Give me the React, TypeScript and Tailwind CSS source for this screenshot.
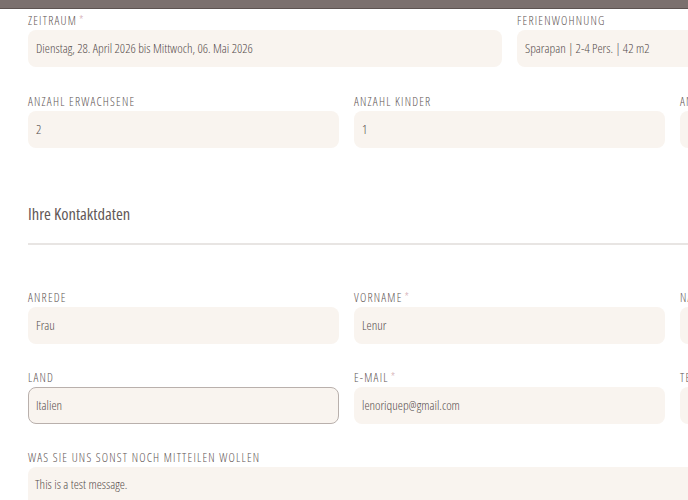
import React from "react";

const font = { fontFamily: '"Open Sans", "DejaVu Sans Condensed", sans-serif', fontStretch: "75%" };

function Label({ text, required }: { text: string; required?: boolean }) {
  return (
    <div className="h-[14px] text-[12px] leading-[14px] tracking-[0.1em] uppercase font-light text-[#5e5453] whitespace-nowrap mb-[2px]">
      {text}
      {required && <span className="text-[#cfa5ad] ml-[2px]">*</span>}
    </div>
  );
}

function Field({
  label,
  value,
  required,
  focused,
}: {
  label: string;
  value: string;
  required?: boolean;
  focused?: boolean;
}) {
  return (
    <div className="flex flex-col">
      <Label text={label} required={required} />
      <div
        className={
          "h-[37px] rounded-[8px] bg-[#f9f4ef] px-[7px] flex items-center text-[13px] font-light text-[#574e4d] whitespace-nowrap overflow-hidden " +
          (focused ? "border border-[#b9b0ac]" : "border border-transparent")
        }
      >
        {value}
      </div>
    </div>
  );
}

export default function App() {
  return (
    <div className="w-[688px] h-[500px] overflow-hidden bg-white" style={font}>
      <div className="h-[9px] bg-[#7b706e] border-b border-[#5d5351]" />
      <div className="w-[963px] ml-[28px] pt-[5px]">
        <div className="grid grid-cols-2 gap-x-[15px]">
          <Field label="Zeitraum" required value="Dienstag, 28. April 2026 bis Mittwoch, 06. Mai 2026" />
          <Field label="Ferienwohnung" value="Sparapan | 2-4 Pers. | 42 m2" />
        </div>
        <div className="grid grid-cols-3 gap-x-[15px] mt-[28px]">
          <Field label="Anzahl Erwachsene" value="2" />
          <Field label="Anzahl Kinder" value="1" />
          <Field label="Anzahl Haustiere" value="1" />
        </div>

        <h2 className="mt-[56px] text-[16.5px] leading-[20px] text-[#625857]">Ihre Kontaktdaten</h2>
        <div className="mt-[19px] h-[2px] bg-[#e8e5e3]" />

        <div className="grid grid-cols-3 gap-x-[15px] mt-[46px]">
          <Field label="Anrede" value="Frau" />
          <Field label="Vorname" required value="Lenur" />
          <Field label="Nachname" required value="Costa" />
        </div>
        <div className="grid grid-cols-3 gap-x-[15px] mt-[27px]">
          <Field label="Land" value="Italien" focused />
          <Field label="E-Mail" required value="lenoriquep@gmail.com" />
          <Field label="Telefon" value="+39 333 1234567" />
        </div>

        <div className="mt-[27px] flex flex-col">
          <Label text="Was Sie uns sonst noch mitteilen wollen" />
          <div className="h-[90px] rounded-[8px] bg-[#f9f4ef] px-[7px] pt-[8px] text-[13px] font-light text-[#574e4d]">
            This is a test message.
          </div>
        </div>
      </div>
    </div>
  );
}
